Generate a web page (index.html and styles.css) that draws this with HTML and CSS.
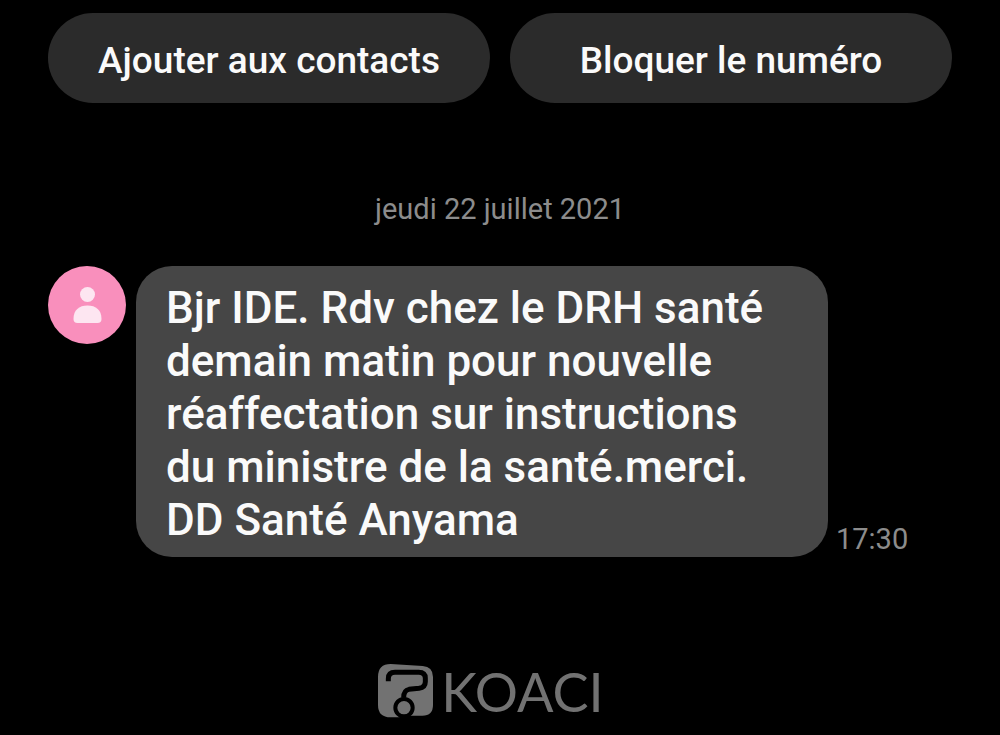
FILE: index.html
```html
<!DOCTYPE html>
<html lang="fr">

<head>
    <meta charset="UTF-8">
    <meta name="viewport" content="width=device-width, initial-scale=1.0">
    <title>Messages</title>
    <link rel="stylesheet" href="styles.css">
</head>

<body>

    <div class="actions">
        <button type="button" class="action">Ajouter aux contacts</button>
        <button type="button" class="action">Bloquer le numéro</button>
    </div>

    <main class="conversation">
        <p class="date">jeudi 22 juillet 2021</p>

        <div class="message">
            <svg class="avatar" viewBox="0 0 156 156" aria-hidden="true">
                <circle cx="78" cy="78" r="78" fill="#f98fbc" />
                <circle cx="79" cy="57" r="15" fill="#fde6f1" />
                <path d="M51 106C51 88 62 79 79 79S107 88 107 106Q107 114 99 114H59Q51 114 51 106Z" fill="#fde6f1" />
            </svg>
            <p class="bubble">Bjr IDE. Rdv chez le DRH santé demain matin pour nouvelle réaffectation sur instructions du ministre de la santé.merci.<br>DD Santé Anyama</p>
            <time class="time">17:30</time>
        </div>
    </main>

    <footer class="brand">
        <svg class="brand-logo" viewBox="24 23 165 162" aria-hidden="true">
            <path d="M62 23L158 29Q189 31 189 62V146Q189 178 157 178H126L85 183H62Q24 183 24 146V62Q24 23 62 23Z" fill="#727272" />
            <path d="M55 75V67Q55 48 75 48H146Q166 48 166 66V76Q166 93 147 96L117 99Q101 102 101 124" fill="none" stroke="#000" stroke-width="15" />
            <circle cx="102" cy="154" r="26" fill="#727272" stroke="#000" stroke-width="12" />
        </svg>
        <span class="brand-name">KOACI</span>
    </footer>

</body>

</html>
```

FILE: styles.css
```css
* {
    margin: 0;
    padding: 0;
    box-sizing: border-box;
}

body {
    min-height: 100vh;
    display: flex;
    flex-direction: column;
    padding: 13px 48px 16px;
    background-color: #000;
    color: #fafafa;
    font-family: Roboto, "Liberation Sans", sans-serif;
}

.actions {
    display: flex;
    gap: 20px;
}

.action {
    flex: 1;
    height: 90px;
    padding-top: 4px;
    border: none;
    border-radius: 45px;
    background-color: #2b2b2b;
    color: #fafafa;
    font-family: inherit;
    font-size: 37px;
    font-weight: 500;
    cursor: pointer;
}

.date {
    margin: 89px 0 40px;
    color: #8c8c8c;
    font-size: 29px;
    line-height: 34px;
    text-align: center;
}

.message {
    display: flex;
    align-items: flex-start;
}

.avatar {
    flex: none;
    width: 78px;
    height: 78px;
    margin-right: 10px;
}

.bubble {
    max-width: 692px;
    padding: 16px 40px 10px 30px;
    border-radius: 36px;
    background-color: #464646;
    font-size: 44px;
    font-weight: 500;
    line-height: 53px;
}

.time {
    align-self: flex-end;
    margin-left: 8px;
    color: #8c8c8c;
    font-size: 29px;
    line-height: 36px;
}

.brand {
    display: flex;
    justify-content: center;
    align-items: center;
    gap: 8px;
    margin-top: auto;
    padding-right: 18px;
    color: #727272;
}

.brand-logo {
    width: 55px;
    height: 54px;
}

.brand-name {
    padding-top: 3px;
    font-family: Lato, sans-serif;
    font-size: 54px;
    line-height: 54px;
}
```
